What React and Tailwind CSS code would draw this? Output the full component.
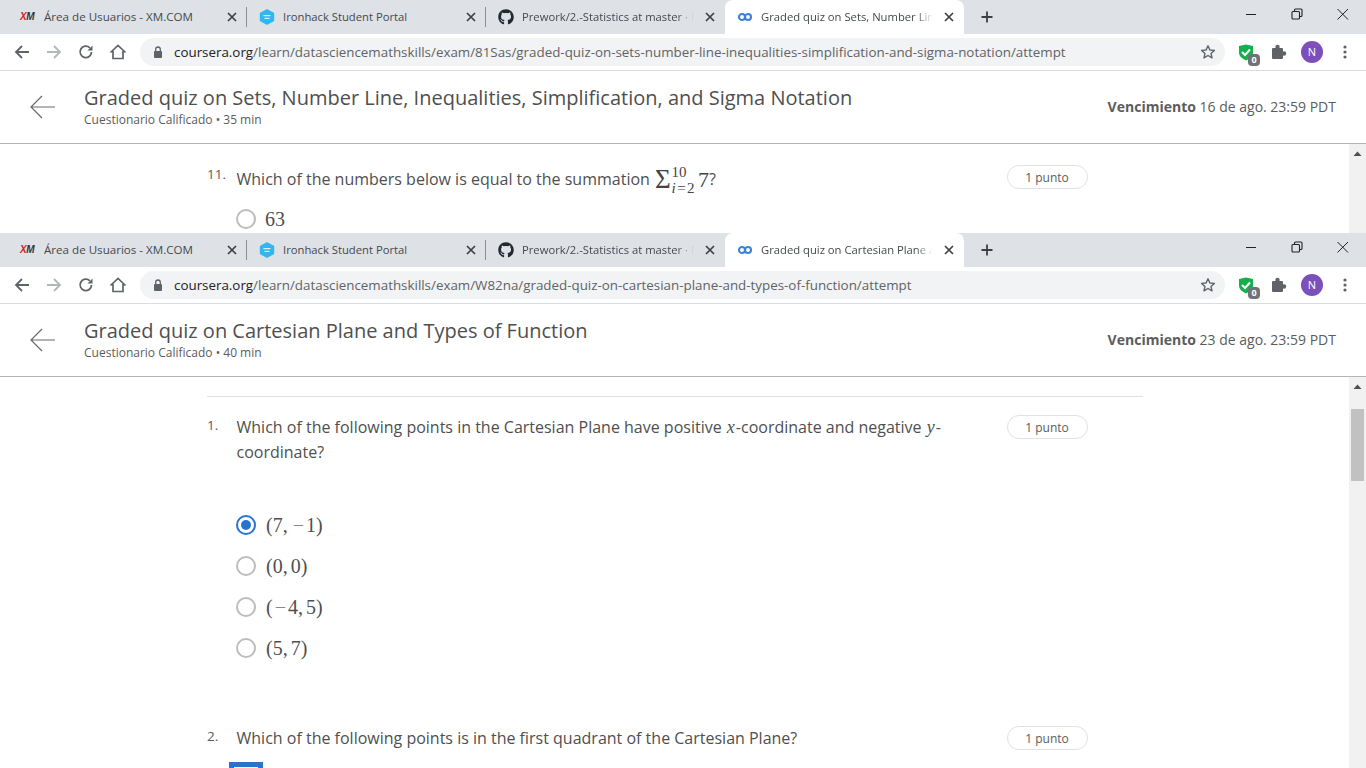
import React from "react";
import { FaGithub } from "react-icons/fa";

const CoLogo = () => (
  <svg width="16" height="16" viewBox="0 0 16 16" fill="none" stroke="#3b82d6" strokeWidth="2.1">
    <circle cx="5" cy="8" r="3" />
    <circle cx="11" cy="8" r="3" />
  </svg>
);

const IronIcon = () => (
  <svg width="16" height="16" viewBox="0 0 16 16">
    <path d="M8 0.8 L14.5 4.4 V11.6 L8 15.2 L1.5 11.6 V4.4 Z" fill="#2fb8ee" stroke="#2fb8ee" strokeWidth="1.4" strokeLinejoin="round" />
    <rect x="4.5" y="6" width="7" height="1.2" fill="#d8f4fb" />
    <rect x="5.5" y="8.8" width="5" height="1.2" fill="#d8f4fb" />
  </svg>
);

const XmIcon = () => (
  <span className="w-4 text-[10px] leading-4 font-black italic tracking-[-0.5px] text-[#333] font-['Liberation_Sans',sans-serif]">
    <span className="text-[#d0232b]">X</span>M
  </span>
);

const PuzzleIcon = () => (
  <svg width="16" height="16" viewBox="0 0 16 16" fill="#5f6368" className="ml-[17px]">
    <rect x="1" y="4" width="11" height="11" rx="1" />
    <circle cx="6.5" cy="3" r="2.2" />
    <circle cx="13" cy="9.5" r="2.2" />
  </svg>
);

function Tab({ icon, title, active, fade, sep, textSize = "text-[11.25px]" }) {
  return (
    <div className={`relative flex items-center w-[239px] h-full pl-3 pr-[7px] gap-2 ${active ? "bg-white rounded-t-lg" : ""}`}>
      <span className="w-4 h-4 flex items-center justify-center shrink-0">{icon}</span>
      <span
        className={`flex-1 whitespace-nowrap overflow-hidden text-[#45494d] ${textSize} ${fade ? "[mask-image:linear-gradient(to_right,black_90%,transparent)]" : ""}`}
      >
        {title}
      </span>
      <svg width="16" height="16" viewBox="0 0 16 16" stroke="#3c4043" strokeWidth="1.7" className="shrink-0">
        <path d="M4 4 L12 12 M12 4 L4 12" />
      </svg>
      {sep && <span className="absolute right-0 top-[7px] h-5 w-px bg-[#8a8d91]" />}
    </div>
  );
}

function TabStrip({ title }) {
  return (
    <div className="flex items-stretch h-[34px] bg-[#dee1e6] pl-2">
      <Tab icon={<XmIcon />} title="Área de Usuarios - XM.COM" sep textSize="text-[11.6px]" />
      <Tab icon={<IronIcon />} title="Ironhack Student Portal" sep />
      <Tab icon={<FaGithub size={16} color="#24292e" />} title="Prework/2.-Statistics at master · Nikita" fade />
      <Tab icon={<CoLogo />} title={title} active fade />
      <div className="flex items-center ml-[15px]">
        <svg width="16" height="16" viewBox="0 0 16 16" stroke="#3c4043" strokeWidth="1.8">
          <path d="M8 2.5 V13.5 M2.5 8 H13.5" />
        </svg>
      </div>
      <div className="ml-auto flex items-start pt-[6px] pr-[15px] gap-[30px]">
        <svg width="16" height="16" viewBox="0 0 16 16" stroke="#222" strokeWidth="1" fill="none">
          <path d="M3 8.5 H13" />
        </svg>
        <svg width="16" height="16" viewBox="0 0 16 16" stroke="#222" strokeWidth="1.1" fill="none">
          <rect x="3" y="5.5" width="7.5" height="7.5" rx="1" />
          <path d="M5.5 5.5 V4 Q5.5 3 6.5 3 H12 Q13 3 13 4 V9.5 Q13 10.5 12 10.5 H10.5" />
        </svg>
        <svg width="16" height="16" viewBox="0 0 16 16" stroke="#222" strokeWidth="1" fill="none">
          <path d="M2.5 3 L13 13.5 M13 3 L2.5 13.5" />
        </svg>
      </div>
    </div>
  );
}

function Toolbar({ path }) {
  return (
    <div className="flex items-center h-[37px] bg-white border-b border-[#dadce0] pl-[14px] pr-[19px]">
      <svg width="16" height="16" viewBox="0 0 16 16" fill="none" stroke="#5f6368" strokeWidth="1.8">
        <path d="M15 8 H2 M8 2 L2 8 L8 14" />
      </svg>
      <svg width="16" height="16" viewBox="0 0 16 16" fill="none" stroke="#b4b7ba" strokeWidth="1.8" className="ml-[16px]">
        <path d="M1 8 H14 M8 2 L14 8 L8 14" />
      </svg>
      <svg width="16" height="16" viewBox="0 0 16 16" fill="none" stroke="#5f6368" strokeWidth="1.8" className="ml-[16px]">
        <path d="M13.5 8 A5.7 5.7 0 1 1 11.8 3.8" />
        <path d="M14.5 1.5 V6.5 H9.5 Z" fill="#5f6368" stroke="none" />
      </svg>
      <svg width="18" height="18" viewBox="0 0 18 18" fill="none" stroke="#5f6368" strokeWidth="1.7" className="ml-[15px]">
        <path d="M1.5 9.5 L9 2.5 L16.5 9.5 M4 8 V15.5 H14 V8" />
      </svg>
      <div className="flex items-center flex-1 h-7 ml-[13px] rounded-full bg-[#f1f3f4] pl-3 pr-[9px]">
        <svg width="12" height="14" viewBox="0 0 12 14" fill="#5f6368">
          <rect x="2" y="6" width="8" height="7" rx="1" />
          <path d="M3.7 6 V4.3 A2.3 2.3 0 0 1 8.3 4.3 V6" fill="none" stroke="#5f6368" strokeWidth="1.3" />
        </svg>
        <span className="ml-[10px] flex-1 whitespace-nowrap text-[13.37px] text-[#5f6368]">
          <span className="text-[#202124]">coursera.org</span>
          {path}
        </span>
        <svg width="16" height="16" viewBox="0 0 16 16" fill="none" stroke="#5f6368" strokeWidth="1.4" strokeLinejoin="round">
          <path d="M8 1.8 L9.9 6 L14.4 6.4 L11 9.4 L12 13.9 L8 11.5 L4 13.9 L5 9.4 L1.6 6.4 L6.1 6 Z" />
        </svg>
      </div>
      <div className="relative ml-[13px] w-4 h-4">
        <svg width="16" height="17" viewBox="0 0 16 17">
          <path d="M1 2 L8 0.5 L15 2 V9 Q15 13 8 16.5 Q1 13 1 9 Z" fill="#14b04c" />
          <path d="M4 8 L7 11 L12 5.5" fill="none" stroke="#fff" strokeWidth="2" />
        </svg>
        <span className="absolute left-[10px] top-[10px] w-3 h-3 rounded-sm bg-[#6f7277] text-white text-[9px] leading-3 text-center font-bold">0</span>
      </div>
      <PuzzleIcon />
      <span className="ml-[14px] w-[22px] h-[22px] rounded-full bg-[#7c4fbb] text-white text-[11px] leading-[22px] text-center">N</span>
      <svg width="4" height="16" viewBox="0 0 4 16" fill="#5f6368" className="ml-[20px]">
        <circle cx="2" cy="3" r="1.6" />
        <circle cx="2" cy="8" r="1.6" />
        <circle cx="2" cy="13" r="1.6" />
      </svg>
    </div>
  );
}

function QuizHeader({ title, time, due }) {
  return (
    <div className="flex items-center h-[73px] pb-[3px] bg-white border-b border-b-[#b5b5b5] pl-[30px] pr-[30px]">
      <svg width="25" height="24" viewBox="0 0 25 24" fill="none" stroke="#6a6a6a" strokeWidth="1.2" className="mt-[2px]">
        <path d="M25 12 H1 M12 1 L1 12 L12 23" />
      </svg>
      <div className="ml-[29px] flex-1">
        <div className="text-[20px] leading-[27px] text-[#4f4f4f]">{title}</div>
        <div className="text-[12px] leading-[16px] text-[#5c5c5c] mt-[1px]">Cuestionario Calificado • {time}</div>
      </div>
      <div className="text-[14px] leading-5 pt-[2px] text-[#5c5c5c]">
        <span className="font-bold">Vencimiento</span> {due} de ago. 23:59 PDT
      </div>
    </div>
  );
}

function Pill() {
  return (
    <span className="block w-[81px] h-6 rounded-full border border-[#e1e1e1] text-[12px] leading-[23px] text-center text-[#5c5c5c] shrink-0">
      1 punto
    </span>
  );
}

function Scrollbar({ thumb }) {
  return (
    <div className="w-[17px] bg-[#f1f1f1] shrink-0 flex flex-col items-center">
      <svg width="9" height="5" viewBox="0 0 9 5" fill="#505050" className="mt-[7px]">
        <path d="M0.5 5 L4.5 0.5 L8.5 5 Z" />
      </svg>
      {thumb && <div className="w-[13px] h-[72px] mt-5 bg-[#c1c1c1]" />}
    </div>
  );
}

function Question({ num, pt, children }) {
  return (
    <div className={`flex items-start ${pt}`}>
      <span className="w-[30px] text-[13.5px] leading-[20px] text-[#5c5c5c]">{num}</span>
      <p className="w-[720px] -ml-[0.5px] text-[16px] leading-[25px] text-[#4f4f4f]">{children}</p>
      <div className="ml-[50px]">
        <Pill />
      </div>
    </div>
  );
}

function Radio({ checked }) {
  return checked ? (
    <span className="flex items-center justify-center w-5 h-5 rounded-full border-2 border-[#2a73cc] bg-white">
      <span className="w-[10px] h-[10px] rounded-full bg-[#2a73cc]" />
    </span>
  ) : (
    <span className="block w-5 h-5 rounded-full border-2 border-[#bdbdbd] bg-white" />
  );
}

function Option({ checked, children }) {
  return (
    <div className="flex items-center h-[41px] pl-[29px] gap-[10px]">
      <Radio checked={checked} />
      <span className="flex items-center font-['Liberation_Serif',serif] text-[20px] text-[#4f4f4f] whitespace-nowrap">{children}</span>
    </div>
  );
}

const Mi = ({ children }) => <span className="font-['Liberation_Serif',serif] italic text-[18px] px-[1px]">{children}</span>;
const Minus = () => <span className="px-[2px] text-[#888]">−</span>;
const Comma = () => <span className="mr-[3px]">,</span>;

export default function App() {
  return (
    <div className="w-[1366px] h-[768px] overflow-hidden bg-white font-['Open_Sans',sans-serif]">
      {/* back window, cut off by the one in front */}
      <div className="flex flex-col h-[233px] overflow-hidden">
        <TabStrip title="Graded quiz on Sets, Number Line, Inequalities" />
        <Toolbar path="/learn/datasciencemathskills/exam/81Sas/graded-quiz-on-sets-number-line-inequalities-simplification-and-sigma-notation/attempt" />
        <QuizHeader title="Graded quiz on Sets, Number Line, Inequalities, Simplification, and Sigma Notation" time="35 min" due="16" />
        <div className="flex flex-1 min-h-0">
          <div className="flex-1 pl-[207px] overflow-hidden">
            <div className="flex items-start pt-[21px]">
              <span className="w-[30px] -mt-[1px] text-[13.5px] leading-[20px] text-[#5c5c5c]">11.</span>
              <p className="w-[720px] h-[25px] -ml-[0.5px] mt-[2px] text-[16px] leading-[25px] text-[#4f4f4f] whitespace-nowrap flex items-center">
                Which of the numbers below is equal to the summation
                <span className="ml-[5px] font-['Liberation_Serif',serif] text-[27px] leading-[25px] text-[#444]">Σ</span>
                <span className="inline-flex flex-col ml-[1px] font-['Liberation_Serif',serif] text-[15px] leading-[16px] text-[#444] mt-[1px]">
                  <span>10</span>
                  <span className="tracking-[1.4px]"><i>i</i>=2</span>
                </span>
                <span className="ml-[2px] font-['Liberation_Serif',serif] text-[22px] text-[#444]">7</span>?
              </p>
              <div className="ml-[50px]">
                <Pill />
              </div>
            </div>
            <div className="flex items-center pl-[29px] gap-[9px] mt-[12px]">
              <Radio />
              <span className="font-['Liberation_Serif',serif] text-[20px] text-[#4f4f4f]">63</span>
            </div>
          </div>
          <Scrollbar />
        </div>
      </div>

      {/* front window */}
      <div className="flex flex-col h-[535px] overflow-hidden">
        <TabStrip title="Graded quiz on Cartesian Plane and Types" />
        <Toolbar path="/learn/datasciencemathskills/exam/W82na/graded-quiz-on-cartesian-plane-and-types-of-function/attempt" />
        <QuizHeader title="Graded quiz on Cartesian Plane and Types of Function" time="40 min" due="23" />
        <div className="flex flex-1 min-h-0">
          <div className="flex-1 overflow-hidden">
            <div className="ml-[207px] w-[936px] mt-[19px] border-t border-[#e1e1e1]">
              <Question num="1." pt="pt-[18px]">
                Which of the following points in the Cartesian Plane have positive <Mi>x</Mi>-coordinate and negative <Mi>y</Mi>-coordinate?
              </Question>
              <div className="mt-[39px]">
                <Option checked>(7<Comma /><Minus />1)</Option>
                <Option>(0<Comma />0)</Option>
                <Option>(<Minus />4<Comma />5)</Option>
                <Option>(5<Comma />7)</Option>
              </div>
              <Question num="2." pt="pt-[58px]">
                Which of the following points is in the first quadrant of the Cartesian Plane?
              </Question>
              <div className="ml-[22px] mt-[11px] w-[34px] h-4 border-[5px] border-[#2a73cc]" />
            </div>
          </div>
          <Scrollbar thumb />
        </div>
      </div>
    </div>
  );
}
